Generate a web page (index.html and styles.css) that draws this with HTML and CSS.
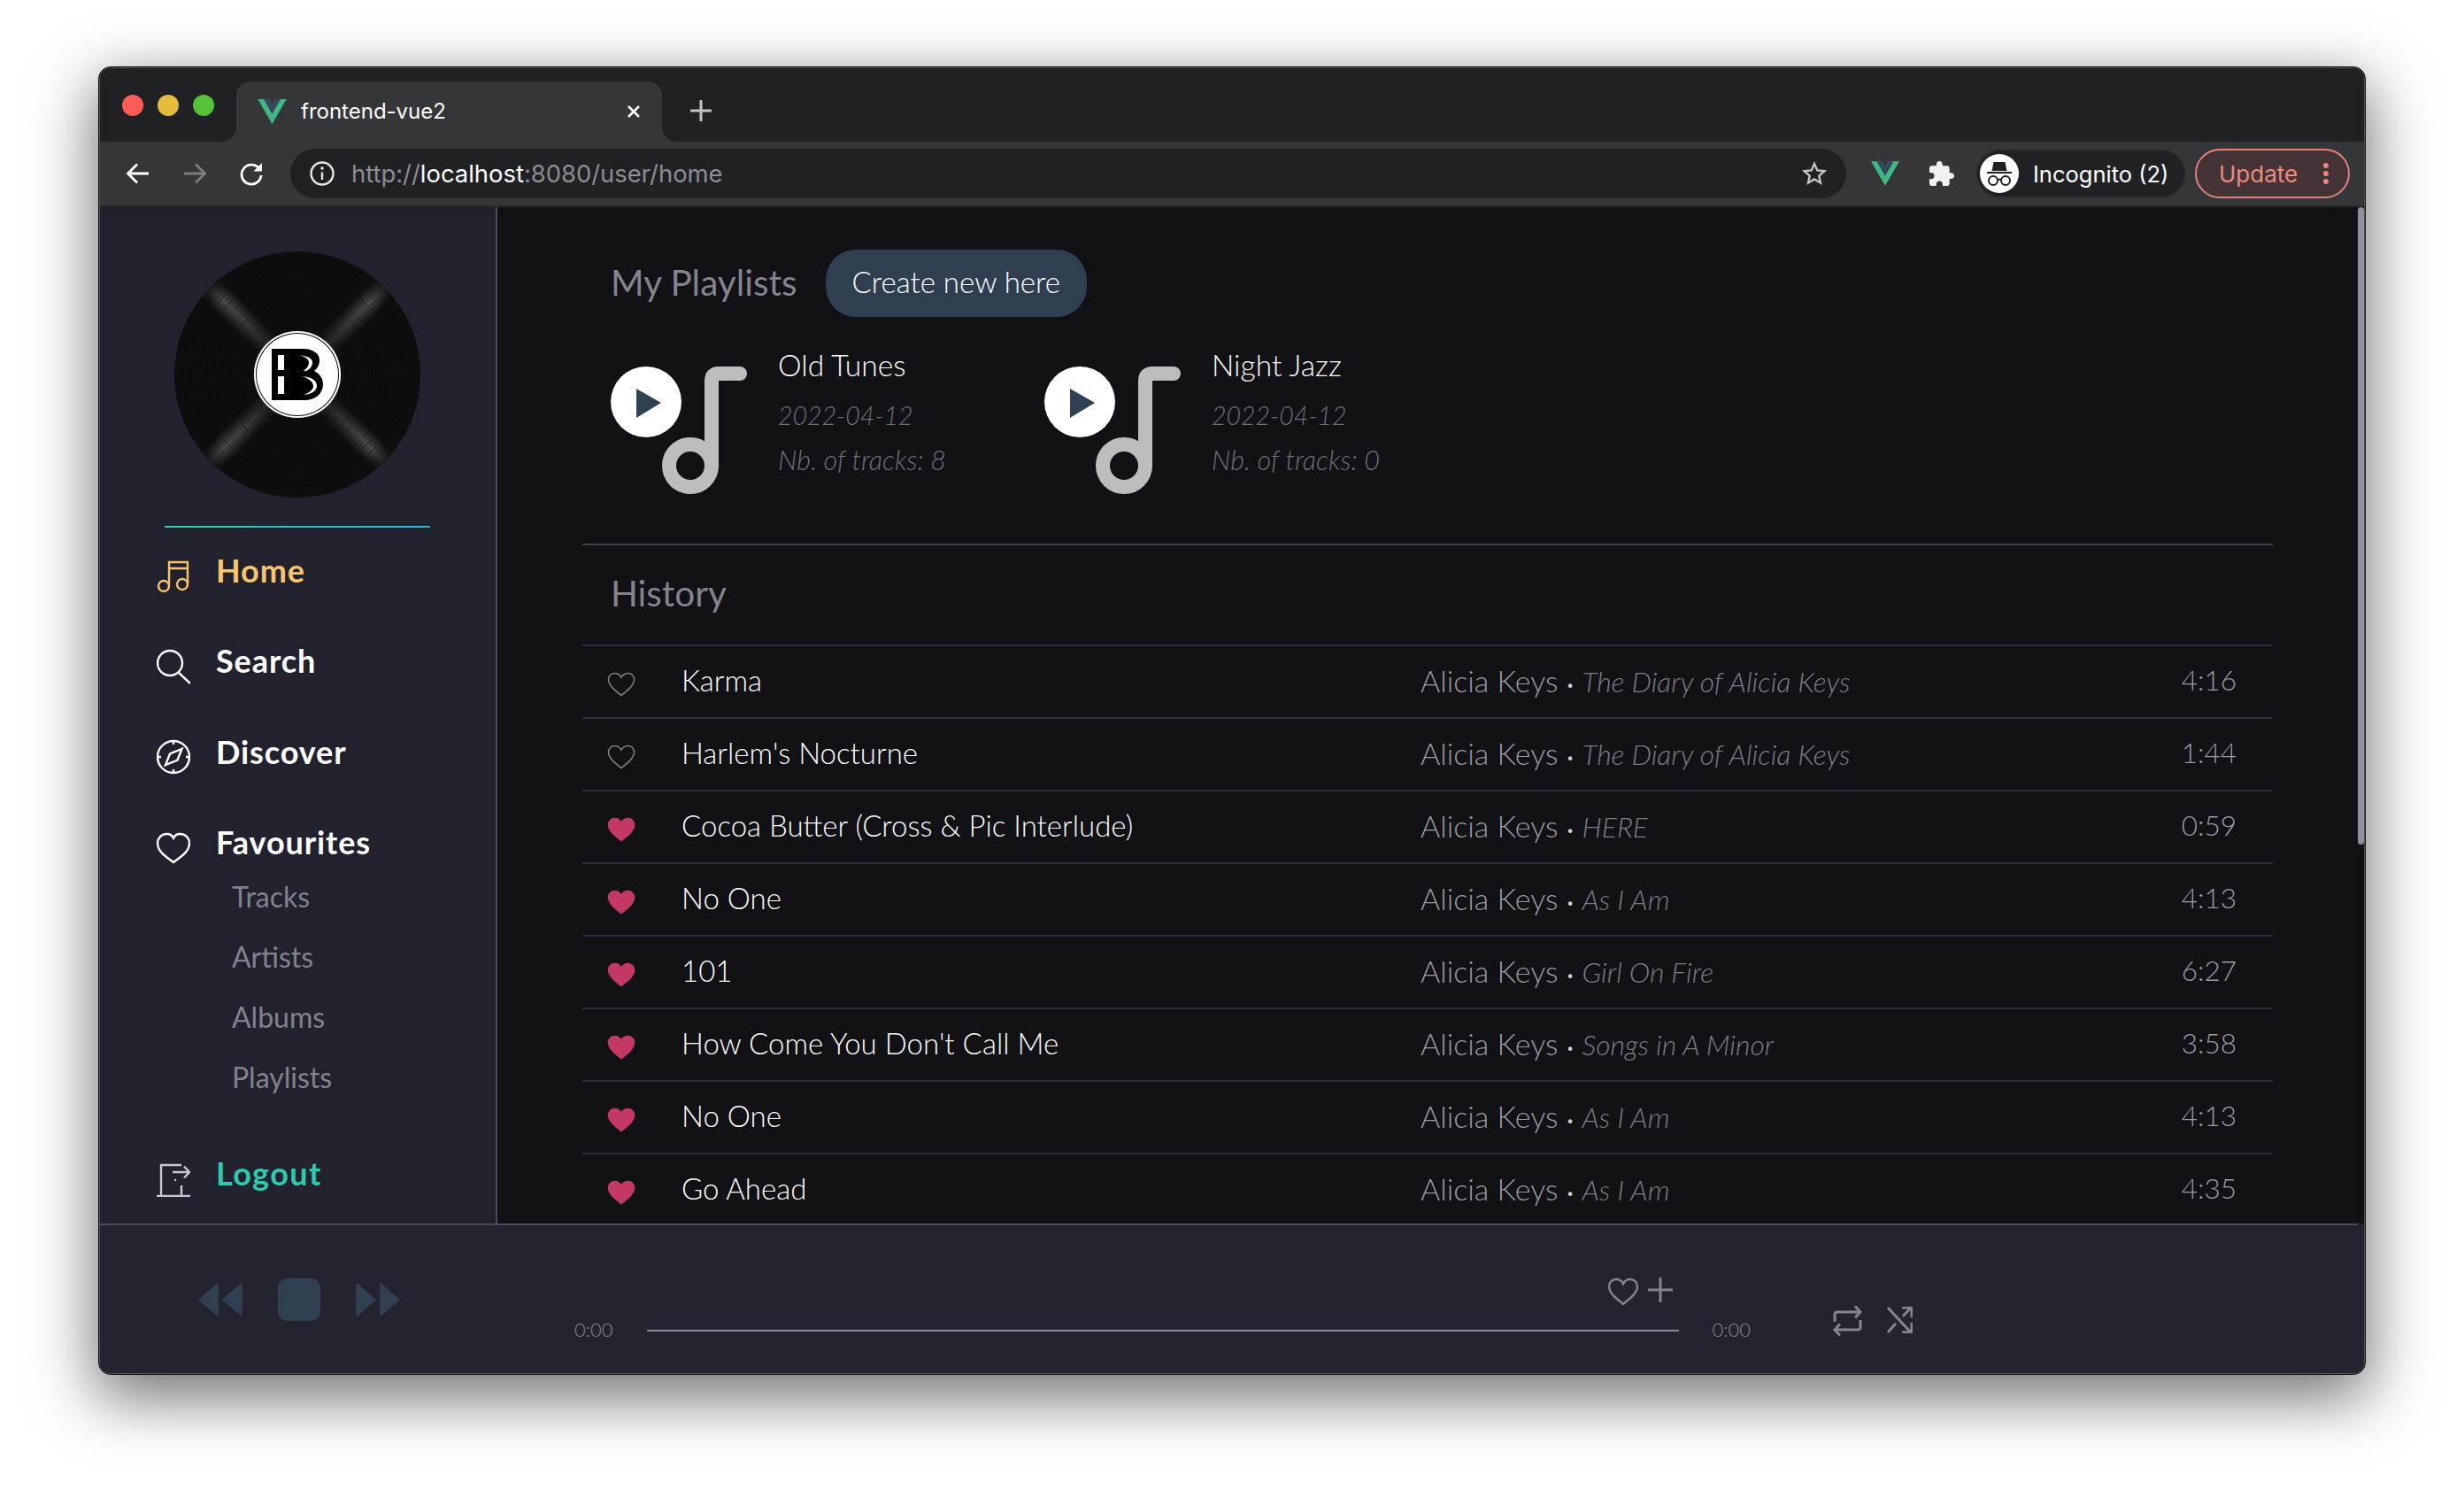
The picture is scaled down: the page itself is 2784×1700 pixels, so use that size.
FILE: index.html
```html
<!DOCTYPE html>
<html lang="en">
<head>
<meta charset="utf-8">
<title>frontend-vue2</title>
<link rel="stylesheet" href="styles.css">
</head>
<body>
<svg class="defs" width="0" height="0" aria-hidden="true">
  <symbol id="heart" viewBox="0 0 32 28"><path d="M16 26.5C7 19.5 1.5 14.5 1.5 8.6 1.500 4.500 4.500 1.500 8.500 1.500c3.200 0 6 1.800 7.500 4.700 1.500-2.900 4.300-4.700 7.500-4.700 4 0 7 3 7 7.100 0 5.900-5.500 10.900-14.500 17.900z"/></symbol>
  <symbol id="vue" viewBox="0 0 261.76 226.69"><path fill="#41b883" d="M161.096.001l-30.225 52.351L100.647.001H-.005l130.877 226.688L261.749.001z"/><path fill="#34495e" d="M161.096.001l-30.225 52.351L100.647.001H52.346l78.526 136.01L209.398.001z"/></symbol>
  <symbol id="note" viewBox="0 0 96 144"><path d="M88 8H64q-8 0-8 8V112" fill="none" stroke-width="16" stroke-linecap="round" stroke="#bdbdbd"/><circle cx="32" cy="112" r="24" fill="none" stroke-width="16" stroke="#bdbdbd"/></symbol>
  <symbol id="play" viewBox="0 0 80 80"><circle cx="40" cy="40" r="40" fill="#fff"/><path d="M29 25L57 41 29 58z" fill="#2f4153"/></symbol>
</svg>

<div class="window">
<div class="window-inner">

  <header class="tabstrip">
    <div class="lights"><i class="light red"></i><i class="light yellow"></i><i class="light green"></i></div>
    <div class="tab">
      <svg class="tab-logo"><use href="#vue"/></svg>
      <span class="tab-title">frontend-vue2</span>
      <svg class="tab-close" viewBox="0 0 14 14"><path d="M1 1L13 13M13 1L1 13"/></svg>
    </div>
    <svg class="new-tab" viewBox="0 0 24 24"><path d="M12 1V23M1 12H23"/></svg>
  </header>

  <div class="toolbar">
    <svg class="tool" viewBox="0 0 28 28"><path d="M26 14H3M13 3.500L2.500 14 13 24.500"/></svg>
    <svg class="tool dim" viewBox="0 0 28 28"><path d="M2 14H25M15 3.500L25.500 14 15 24.500"/></svg>
    <svg class="tool" viewBox="0 0 28 28"><path d="M23.500 9.500A11 11 0 1 0 25 16"/><path class="solid" d="M26 2V11.500H16.500z"/></svg>
    <div class="omnibox">
      <svg class="info" viewBox="0 0 28 28"><circle cx="14" cy="14" r="12.500"/><path d="M14 12.500V21"/><circle class="dot" cx="14" cy="8" r="1.800"/></svg>
      <span class="url">http://<b>localhost</b>:8080/user/home</span>
      <svg class="star" viewBox="0 0 28 28"><path d="M14 3l3.300 7.400 8 .8-6 5.400 1.700 7.900-7-4-7 4 1.700-7.900-6-5.400 8-.8z"/></svg>
    </div>
    <svg class="ext-vue"><use href="#vue"/></svg>
    <svg class="puzzle" viewBox="2 1 21 21"><path d="M20.500 11H19V7c0-1.100-.9-2-2-2h-4V3.500C13 2.120 11.880 1 10.500 1S8 2.120 8 3.500V5H4c-1.100 0-1.990.9-1.990 2v3.800H3.500c1.490 0 2.700 1.210 2.700 2.700s-1.210 2.700-2.700 2.700H2V20c0 1.100.9 2 2 2h3.800v-1.500c0-1.490 1.210-2.700 2.700-2.700 1.490 0 2.700 1.210 2.700 2.700V22H17c1.100 0 2-.9 2-2v-4h1.500c1.380 0 2.500-1.120 2.500-2.500S21.880 11 20.500 11z"/></svg>
    <div class="incognito">
      <svg class="spy" viewBox="0 0 44 44"><circle cx="22" cy="22" r="22" fill="#fff"/><path d="M15.500 9h13l2 10h-17zM8 20h28v2H8z" fill="#202124"/><g fill="none" stroke="#202124" stroke-width="2"><circle cx="15" cy="30" r="5"/><circle cx="29" cy="30" r="5"/><path d="M20 29q2-1 4 0"/></g></svg>
      <span>Incognito (2)</span>
    </div>
    <div class="update">
      <span>Update</span>
      <span class="kebab"><i></i><i></i><i></i></span>
    </div>
  </div>

  <div class="app">
    <aside class="sidebar">
      <div class="vinyl"><div class="vinyl-grooves"></div>
        <div class="vinyl-label">
          <svg class="bb" viewBox="0 0 58 58">
            <path d="M0 0H36C47 0 54 5.500 54 13 54 18.500 51.500 22.500 48 25 54 28 58 33.500 58 40 58 51 49 58 37 58H0z"/>
            <path class="cut" d="M7 7H14V24H7zM7 31H14V51H7z"/>
            <path class="cut" d="M30 7C39 8 46 10 46 15.500 46 20 43 23 39 25H36C40 22 42 19 42 15.500 42 11 37 8.500 30 7z"/>
            <path class="cut" d="M34 31C46 32 51 36 51 42 51 47 46 51 36 52 43 49.500 47 46 47 42 47 37 41 33 34 31z"/>
          </svg>
        </div>
      </div>
      <div class="rule"></div>
      <nav class="nav">
        <a class="nav-item home">
          <svg class="nav-icon" viewBox="0 0 38 38"><path d="M14 30V4H35V28M14 11H35"/><circle cx="8" cy="31" r="6"/><circle cx="29" cy="29" r="6"/></svg>
          <span>Home</span>
        </a>
        <a class="nav-item">
          <svg class="nav-icon" viewBox="0 0 38 40"><circle cx="15" cy="16" r="14"/><path d="M25 27L38 39"/></svg>
          <span>Search</span>
        </a>
        <a class="nav-item">
          <svg class="nav-icon" viewBox="0 0 38 40"><circle cx="19" cy="20" r="18"/><path d="M19 1V6M19 34V39M0 20H5M33 20H38M28.500 11L23.500 23.500 10 29 15 16.500z"/></svg>
          <span>Discover</span>
        </a>
        <a class="nav-item fav">
          <svg class="nav-icon" viewBox="0 0 38 36"><path d="M19 34C8 26 1 21 1 12.500 1 6 6 2 11.500 2 14.500 2 17.500 3.500 19 6.500 20.500 3.500 23.500 2 26.500 2 32 2 37 6 37 12.500 37 21 30 26 19 34z"/></svg>
          <span>Favourites</span>
        </a>
        <ul class="subnav">
          <li>Tracks</li>
          <li>Artists</li>
          <li>Albums</li>
          <li>Playlists</li>
        </ul>
        <a class="nav-item logout">
          <svg class="nav-icon" viewBox="0 0 38 40"><path d="M0 39H38M5 39V4H28M28 27V39M18 12H37M31 5.500L37 12 31 18.500"/><circle class="dot" cx="21" cy="21" r="1.200"/></svg>
          <span>Logout</span>
        </a>
      </nav>
    </aside>

    <main class="main">
      <div class="section-head">
        <h2>My Playlists</h2>
        <button class="create">Create new here</button>
      </div>
      <div class="playlists">
        <article class="playlist">
          <div class="cover"><svg class="play"><use href="#play"/></svg><svg class="note"><use href="#note"/></svg></div>
          <div class="meta"><h3>Old Tunes</h3><p class="date">2022-04-12</p><p class="count">Nb. of tracks: 8</p></div>
        </article>
        <article class="playlist">
          <div class="cover"><svg class="play"><use href="#play"/></svg><svg class="note"><use href="#note"/></svg></div>
          <div class="meta"><h3>Night Jazz</h3><p class="date">2022-04-12</p><p class="count">Nb. of tracks: 0</p></div>
        </article>
      </div>
      <h2 class="history-title">History</h2>
      <div class="tracks">
        <div class="track"><svg class="like"><use href="#heart"/></svg><span class="name">Karma</span><span class="by">Alicia Keys <b>·</b> <em>The Diary of Alicia Keys</em></span><span class="time">4:16</span></div>
        <div class="track"><svg class="like"><use href="#heart"/></svg><span class="name">Harlem's Nocturne</span><span class="by">Alicia Keys <b>·</b> <em>The Diary of Alicia Keys</em></span><span class="time">1:44</span></div>
        <div class="track"><svg class="like on"><use href="#heart"/></svg><span class="name">Cocoa Butter (Cross &amp; Pic Interlude)</span><span class="by">Alicia Keys <b>·</b> <em>HERE</em></span><span class="time">0:59</span></div>
        <div class="track"><svg class="like on"><use href="#heart"/></svg><span class="name">No One</span><span class="by">Alicia Keys <b>·</b> <em>As I Am</em></span><span class="time">4:13</span></div>
        <div class="track"><svg class="like on"><use href="#heart"/></svg><span class="name">101</span><span class="by">Alicia Keys <b>·</b> <em>Girl On Fire</em></span><span class="time">6:27</span></div>
        <div class="track"><svg class="like on"><use href="#heart"/></svg><span class="name">How Come You Don't Call Me</span><span class="by">Alicia Keys <b>·</b> <em>Songs in A Minor</em></span><span class="time">3:58</span></div>
        <div class="track"><svg class="like on"><use href="#heart"/></svg><span class="name">No One</span><span class="by">Alicia Keys <b>·</b> <em>As I Am</em></span><span class="time">4:13</span></div>
        <div class="track"><svg class="like on"><use href="#heart"/></svg><span class="name">Go Ahead</span><span class="by">Alicia Keys <b>·</b> <em>As I Am</em></span><span class="time">4:35</span></div>
      </div>
      <div class="scrollthumb"></div>
    </main>
  </div>

  <footer class="player">
    <div class="transport">
      <svg class="skip" viewBox="0 0 50 38"><path d="M22 1V37L1 19zM49 1V37L28 19z"/></svg>
      <div class="stop"></div>
      <svg class="skip" viewBox="0 0 50 38"><path d="M1 1V37L22 19zM28 1V37L49 19z"/></svg>
    </div>
    <div class="timeline">
      <span class="clock">0:00</span>
      <div class="bar">
        <div class="bar-actions">
          <svg class="bar-heart" viewBox="0 0 36 32"><path d="M18 30C8 22 2 17 2 10 2 5.500 5.500 2 10 2 13.500 2 16.500 4 18 7 19.500 4 22.500 2 26 2 30.500 2 34 5.500 34 10 34 17 28 22 18 30z"/></svg>
          <svg class="bar-plus" viewBox="0 0 28 28"><path d="M14 0V28M0 14H28"/></svg>
        </div>
        <div class="bar-line"></div>
      </div>
      <span class="clock">0:00</span>
      <svg class="repeat" viewBox="0 0 33 36"><path d="M2 19V11Q2 8 5 8H31M25 1.500L31 8 25 14.500M31 17V25Q31 28 28 28H2M8 21.500L2 28 8 34.500"/></svg>
      <svg class="shuffle" viewBox="0 0 29 30"><path d="M1 1L27 29M27 1L18 11M10 19L1 29M17 1H28V12M28 18V29H17"/></svg>
    </div>
  </footer>

</div>
</div>
</body>
</html>
```

FILE: styles.css
```css
* { box-sizing: border-box; }
html, body { margin: 0; background: #fff; }
body {
  width: 2784px;
  height: 1700px;
  padding: 75px 0 0 111px;
  overflow: hidden;
  font-family: Lato, "Open Sans", sans-serif;
}
.defs { position: absolute; }

.window {
  width: 2562px;
  height: 1478px;
  border: 1px solid #0b0b0d;
  border-radius: 14px;
  box-shadow: 0 22px 70px 4px rgba(0, 0, 0, .56);
  background: #23242f;
}
.window-inner {
  height: 100%;
  border: 1px solid #55565c;
  border-radius: 13px;
  overflow: hidden;
  display: flex;
  flex-direction: column;
}

/* Tab strip */
.tabstrip {
  flex: 0 0 83px;
  background: #202124;
  display: flex;
  align-items: flex-end;
  font-family: Inter, Roboto, sans-serif;
}
.lights { display: flex; gap: 16px; align-self: flex-start; margin: 30px 0 0 25px; }
.light { width: 24px; height: 24px; border-radius: 50%; }
.red { background: #fb5c58; }
.yellow { background: #e4bc3b; }
.green { background: #55c137; }
.tab {
  position: relative;
  width: 481px;
  height: 68px;
  margin-left: 25px;
  padding: 0 25px 0 24px;
  background: #35363a;
  border-radius: 16px 16px 0 0;
  display: flex;
  align-items: center;
  gap: 16px;
  color: #fff;
}
.tab::before, .tab::after {
  content: "";
  position: absolute;
  bottom: 0;
  width: 16px;
  height: 16px;
}
.tab::before { left: -16px; background: radial-gradient(circle at 0 0, #202124 15.500px, #35363a 16px); }
.tab::after { right: -16px; background: radial-gradient(circle at 100% 0, #202124 15.500px, #35363a 16px); }
.tab-logo { width: 33px; height: 28px; }
.tab-title { flex: 1; font-size: 24px; line-height: 30px; }
.tab-close { width: 14px; height: 14px; fill: none; stroke: #fff; stroke-width: 2.500; }
.new-tab { width: 24px; height: 24px; margin: 0 0 23px 32px; fill: none; stroke: #c3c4c6; stroke-width: 3; stroke-linecap: round; }

/* Toolbar */
.toolbar {
  flex: 0 0 74px;
  background: #35363a;
  border-bottom: 2px solid #27272b;
  display: flex;
  align-items: center;
  padding: 0 0 0 29px;
  font-family: Inter, Roboto, sans-serif;
}
.tool {
  width: 28px;
  height: 28px;
  margin-right: 36px;
  fill: none;
  stroke: #fff;
  stroke-width: 2.800;
  flex: none;
}
.tool.dim { stroke: #7d7e81; }
.tool .solid { fill: #fff; stroke: none; }
.tool:nth-child(3) { margin-right: 30px; }
.omnibox {
  width: 1758px;
  height: 56px;
  background: #202124;
  border-radius: 28px;
  display: flex;
  align-items: center;
  padding: 0 22px 0 22px;
}
.info { width: 28px; height: 28px; fill: none; stroke: #e8e8e9; stroke-width: 2.400; }
.info .dot { fill: #e8e8e9; stroke: none; }
.url { margin-left: 19px; font-size: 27.400px; color: #8d8e91; white-space: nowrap; }
.url b { font-weight: 400; color: #fff; }
.star { width: 28px; height: 28px; margin-left: auto; fill: none; stroke: #c3c4c6; stroke-width: 2.400; }
.ext-vue { width: 32px; height: 28px; margin-left: 28px; flex: none; }
.puzzle { width: 28px; height: 28px; margin-left: 34px; fill: #f2f2f3; flex: none; }
.incognito {
  width: 238px;
  height: 56px;
  margin-left: 24px;
  padding-left: 3px;
  background: #202124;
  border: 2px solid #2f3034;
  border-radius: 28px;
  display: flex;
  align-items: center;
  gap: 16px;
  color: #fff;
  font-size: 25.500px;
  white-space: nowrap;
  flex: none;
}
.spy { width: 44px; height: 44px; }
.update {
  width: 175px;
  height: 56px;
  margin-left: 10px;
  padding: 0 22px 0 25px;
  background: #453436;
  border: 2px solid #e4827a;
  border-radius: 28px;
  display: flex;
  align-items: center;
  justify-content: space-between;
  color: #ec8a80;
  font-size: 26px;
  flex: none;
}
.kebab { display: flex; flex-direction: column; gap: 3px; }
.kebab i { width: 6px; height: 6px; border-radius: 50%; background: #ec8a80; }

/* App body */
.app { flex: 1; min-height: 0; display: flex; }

.sidebar {
  flex: 0 0 449px;
  background: #21222e;
  border-right: 2px solid #4b4c59;
  padding-top: 50px;
}
.vinyl {
  position: relative;
  left: -1px;
  width: 278px;
  height: 278px;
  margin: 0 auto;
  border-radius: 50%;
  background:
    radial-gradient(circle, rgba(14,14,15,.6) 50px, rgba(14,14,15,.25) 85px, rgba(14,14,15,0) 118px, rgba(14,14,15,.75) 139px),
    linear-gradient(45deg, rgba(255,255,255,0) calc(50% - 15px), rgba(255,255,255,.26) 50%, rgba(255,255,255,0) calc(50% + 15px)),
    linear-gradient(-45deg, rgba(255,255,255,0) calc(50% - 15px), rgba(255,255,255,.26) 50%, rgba(255,255,255,0) calc(50% + 15px)),
    #0e0e0f;
  overflow: hidden;
}
.vinyl-grooves {
  position: absolute;
  inset: 0;
  border-radius: 50%;
  background: repeating-radial-gradient(circle, rgba(0,0,0,0) 0 3px, rgba(0,0,0,.28) 3px 4px, rgba(0,0,0,0) 4px 8px, rgba(0,0,0,.14) 8px 9px);
}
.vinyl-label {
  position: absolute;
  left: 90px;
  top: 90px;
  width: 98px;
  height: 98px;
  border-radius: 50%;
  background: #fff;
  box-shadow: inset 0 0 0 2px #fff, inset 0 0 0 3px #111;
  display: flex;
  align-items: center;
  justify-content: center;
}
.bb { width: 58px; height: 58px; fill: #000; }
.bb .cut { fill: #fff; }
.rule {
  position: relative;
  left: -1px;
  width: 300px;
  height: 2px;
  margin: 32px auto 0;
  background: linear-gradient(90deg, #35c9ae, #36b0d6);
}
.nav { padding: 21px 0 0 64px; }
.nav-item {
  display: flex;
  align-items: center;
  height: 56px;
  margin-bottom: 46.500px;
  color: #fff;
  font-size: 36px;
  font-weight: 700;
  letter-spacing: .9px;
}
.nav-item span { padding-bottom: 3px; }
.nav-icon {
  flex: none;
  width: 38px;
  height: 40px;
  margin: 10px 29px 0 0;
  fill: none;
  stroke: #fff;
  stroke-width: 2.400;
}
.nav-item.home { color: #f8c46f; }
.home .nav-icon { stroke: #f8c46f; }
.nav-item.fav { margin-bottom: 0; }
.nav-item.logout { color: #2fc9b0; margin: 47px 0 0; letter-spacing: 1.400px; }
.logout .nav-icon { stroke: #c8c8cd; }
.logout .dot { fill: #c8c8cd; stroke: none; }
.subnav {
  list-style: none;
  margin: -1px 0 0;
  padding: 0 0 0 85px;
  color: #83838e;
  font-size: 32px;
}
.subnav li { height: 68px; line-height: 65px; }

/* Main */
.main {
  position: relative;
  flex: 1;
  min-width: 0;
  padding: 48px 103px 0 96px;
  background: #111116;
  overflow: hidden;
}
.section-head { display: flex; align-items: center; gap: 32px; padding-left: 32px; }
h2 { margin: 0; font-size: 40.500px; font-weight: 400; color: #84848f; }
.section-head h2 { padding-bottom: 4px; }
.create {
  height: 76px;
  padding: 0 30px 4px;
  border: 0;
  border-radius: 34px;
  background: #2f3f50;
  color: #fff;
  font-family: inherit;
  font-size: 33px;
  font-weight: 300;
}
.playlists {
  display: flex;
  margin-top: 35px;
  padding: 0 0 56px 32px;
  border-bottom: 2px solid #3f3f48;
}
.playlist { display: flex; width: 490px; }
.cover { display: flex; align-items: flex-start; width: 189px; padding-top: 21px; }
.play { width: 80px; height: 80px; flex: none; }
.note { width: 96px; height: 144px; margin-left: -22px; flex: none; }
.meta h3 { margin: 0; height: 40px; font-size: 33.600px; line-height: 38px; font-weight: 300; color: #fff; }
.meta p { margin: 0; line-height: 48px; font-weight: 300; font-style: italic; color: #6f6f79; }
.meta .date { margin: 12px 0 2px; font-size: 28.500px; }
.meta .count { font-size: 30.500px; }
.history-title { height: 50px; line-height: 46px; margin: 31px 0; padding-left: 32px; }
.track {
  display: grid;
  grid-template-columns: 112px 835px 1fr auto;
  align-items: center;
  height: 82px;
  padding: 0 41px 4px 0;
  border-top: 2px solid #2e2d3d;
  font-size: 33px;
  font-weight: 300;
}
.like {
  width: 32px;
  height: 28px;
  margin: 10px 0 0 28px;
  fill: none;
  stroke: #7a7a80;
  stroke-width: 1.600;
}
.like.on { fill: #c23a63; stroke: #c23a63; }
.name { color: #fff; }
.by { color: #9a9aa2; font-size: 34px; white-space: nowrap; }
.by b { font-weight: 700; color: #d0d0d4; font-size: 24px; margin: 0 1px; }
.by em { color: #7d7d85; font-size: 31.800px; }
.time { color: #9a9aa2; font-size: 31.500px; }
.scrollthumb {
  position: absolute;
  top: 0;
  right: 0;
  width: 7px;
  height: 720px;
  background: #8f8f9f;
  border-radius: 4px;
}

/* Player */
.player {
  flex: 0 0 169px;
  background: linear-gradient(#4b4c59, #4b4c59) no-repeat 0 0 / calc(100% - 7px) 2px, #23242f;
  display: flex;
  align-items: flex-start;
  padding-left: 111px;
}
.transport { display: flex; align-items: center; gap: 40px; margin-top: 62px; }
.skip { width: 50px; height: 38px; fill: #304050; stroke: #304050; stroke-width: 1.500; stroke-linejoin: round; }
.stop { width: 48px; height: 48px; border-radius: 10px; background: #304050; }
.timeline { display: flex; align-items: flex-end; margin: 61px 0 0 197px; }
.clock { height: 26px; line-height: 26px; margin-bottom: -11px; font-size: 22px; font-weight: 300; color: #85858f; }
.bar { width: 1166px; margin: 0 38px; }
.bar-actions { display: flex; justify-content: flex-end; align-items: flex-start; gap: 10px; padding-right: 7px; height: 31px; margin-bottom: 28px; }
.bar-heart { width: 36px; height: 32px; fill: none; stroke: #85858f; stroke-width: 2.400; }
.bar-plus { width: 28px; height: 28px; fill: none; stroke: #85858f; stroke-width: 3; }
.bar-line { height: 2px; background: #8a8a92; }
.repeat { width: 33px; height: 36px; margin: 0 28px -6px 93px; fill: none; stroke: #85858f; stroke-width: 3; }
.shuffle { width: 29px; height: 30px; margin-bottom: -2px; fill: none; stroke: #85858f; stroke-width: 3; }
```
